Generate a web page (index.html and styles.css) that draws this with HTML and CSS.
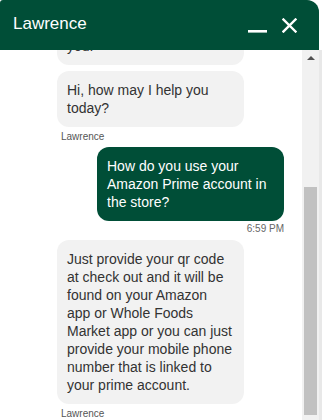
FILE: index.html
```html
<!DOCTYPE html>
<html lang="en">
<head>
<meta charset="utf-8">
<title>Chat</title>
<link rel="stylesheet" href="styles.css">
</head>
<body>
<div class="chat-window">
  <header class="chat-header">
    <h1 class="chat-title">Lawrence</h1>
    <div class="header-actions">
      <button class="icon-btn minimize" aria-label="Minimize">
        <svg width="19" height="19" viewBox="0 0 19 19"><rect x="0" y="14" width="19" height="2.6" fill="#fff"/></svg>
      </button>
      <button class="icon-btn close" aria-label="Close">
        <svg width="15" height="15" viewBox="0 0 15 15"><path d="M1.5 1.5 L13.5 13.5 M13.5 1.5 L1.5 13.5" stroke="#fff" stroke-width="2.4" stroke-linecap="square"/></svg>
      </button>
    </div>
  </header>
  <div class="chat-body">
    <div class="messages">
      <div class="msg agent">
        <div class="bubble">Hello and welcome to Whole Foods Market! My name is Lawrence and I'll be the associate assisting you.</div>
      </div>
      <div class="msg agent">
        <div class="bubble">Hi, how may I help you today?</div>
        <div class="meta">Lawrence</div>
      </div>
      <div class="msg user">
        <div class="bubble">How do you use your Amazon Prime account in the store?</div>
        <div class="meta">6:59 PM</div>
      </div>
      <div class="msg agent">
        <div class="bubble">Just provide your qr code at check out and it will be found on your Amazon app or Whole Foods Market app or you can just provide your mobile phone number that is linked to your prime account.</div>
        <div class="meta">Lawrence</div>
      </div>
    </div>
    <div class="scrollbar">
      <div class="track">
        <div class="arrow-up"></div>
        <div class="thumb"></div>
      </div>
      <div class="edge"></div>
    </div>
  </div>
</div>
</body>
</html>
```
FILE: styles.css
```css
* { box-sizing: border-box; }
html, body {
  margin: 0;
  padding: 0;
  background: #ffffff;
  width: 322px;
  height: 420px;
  overflow: hidden;
  font-family: "Liberation Sans", Arial, sans-serif;
}
.chat-window {
  width: 322px;
  height: 420px;
  display: flex;
  flex-direction: column;
}
.chat-header {
  height: 50px;
  width: 319px;
  flex: none;
  background: #004e37;
  border-radius: 3px 12px 0 0;
  display: flex;
  align-items: center;
  justify-content: space-between;
  padding: 0 0 0 13px;
}
.chat-title {
  margin: 0;
  font-size: 17px;
  font-weight: normal;
  color: #ffffff;
  line-height: 20px;
  padding-bottom: 2px;
}
.header-actions {
  display: flex;
  align-items: center;
  gap: 15px;
  padding-right: 22px;
}
.icon-btn {
  background: none;
  border: 0;
  padding: 0;
  margin: 0;
  display: block;
  line-height: 0;
}
.minimize svg { display: block; }
.close svg { display: block; }
.chat-body {
  flex: 1;
  display: flex;
  min-height: 0;
}
.messages {
  width: 302px;
  flex: none;
  display: flex;
  flex-direction: column;
  justify-content: flex-end;
  overflow: hidden;
  padding: 0 18px 0 57px;
}
.msg {
  display: flex;
  flex-direction: column;
  flex: none;
}
.msg + .msg { margin-top: 6px; }
.msg.user { align-items: flex-end; margin-top: 4px; }
.msg.user + .msg { margin-top: 5px; }
.bubble {
  width: 187px;
  border-radius: 12px;
  padding: 10px 10px;
  font-size: 14px;
  line-height: 18px;
  background: #f2f2f2;
  color: #333333;
}
.msg.user .bubble {
  background: #004e37;
  color: #ffffff;
}
.meta {
  font-size: 10px;
  line-height: 12px;
  color: #555555;
  margin-top: 4px;
  padding-left: 4px;
}
.msg.user .meta {
  margin-top: 2px;
  padding: 0;
  color: #666666;
}
.scrollbar {
  flex: 1;
  display: flex;
}
.track {
  width: 17px;
  background: #f1f1f1;
  display: flex;
  flex-direction: column;
  align-items: center;
  padding: 6px 2px 5px 2px;
}
.arrow-up {
  width: 0;
  height: 0;
  border-left: 4px solid transparent;
  border-right: 4px solid transparent;
  border-bottom: 4px solid #505050;
  margin-left: 1px;
}
.thumb {
  margin-top: auto;
  width: 13px;
  height: 228px;
  background: #c1c1c1;
}
.edge {
  flex: 1;
  background: #e8e8e8;
}
```
